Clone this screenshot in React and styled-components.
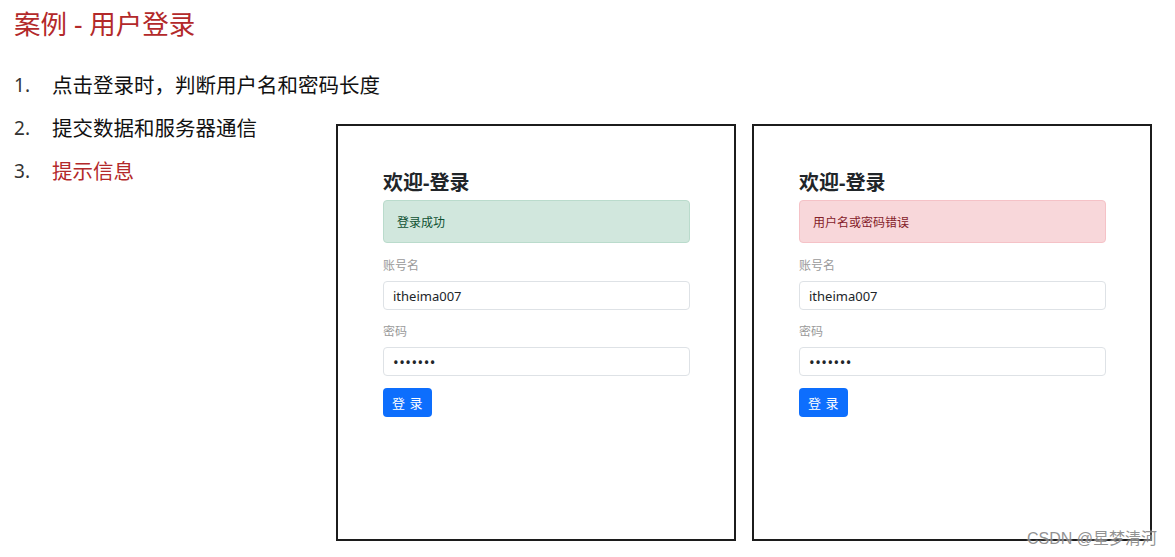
import React from "react";
import styled, { createGlobalStyle, css } from "styled-components";

const GlobalStyle = createGlobalStyle`
  html, body {
    margin: 0;
    padding: 0;
    background: #fff;
  }
  body {
    font-family: "Noto Sans", "Noto Sans CJK SC", sans-serif;
  }
  #root {
    position: relative;
    width: 1175px;
    height: 557px;
    overflow: hidden;
  }
`;

const cjk = `"Noto Sans", "Noto Sans CJK SC", sans-serif`;

const Page = styled.div`
  display: flex;
  flex-direction: column;
`;

const Title = styled.h1`
  margin: 0;
  padding: 6px 0 0 14px;
  font-family: ${cjk};
  font-size: 26.5px;
  font-weight: 400;
  line-height: 36px;
  color: #b3292a;
`;

const Body = styled.div`
  display: flex;
  align-items: flex-start;
  margin-top: 22px;
`;

const Steps = styled.ol`
  list-style: none;
  margin: 0;
  padding: 0 0 0 14px;
  width: 322px;
  flex: none;
`;

const Step = styled.li`
  display: flex;
  white-space: nowrap;
  font-family: ${cjk};
  font-size: 20.5px;
  line-height: 43px;
  color: ${props => (props.highlight ? "#b3292a" : "#111")};
`;

const StepNo = styled.span`
  width: 38px;
  flex: none;
  font-size: 19px;
  color: #333;
`;

const Panels = styled.div`
  display: flex;
  gap: 16px;
  margin-top: 60px;
`;

const Panel = styled.section`
  box-sizing: border-box;
  width: 400px;
  height: 417px;
  border: 2px solid #1c1c1c;
  padding: 45px 0 0 45px;
  font-family: ${cjk};
`;

const Form = styled.div`
  width: 307px;
  display: flex;
  flex-direction: column;
  align-items: flex-start;
`;

const Heading = styled.h2`
  margin: 0 0 5px;
  font-size: 20px;
  font-weight: 700;
  line-height: 24px;
  color: #212529;
`;

const Alert = styled.div`
  box-sizing: border-box;
  width: 100%;
  height: 43px;
  padding: 0 13px;
  display: flex;
  align-items: center;
  border-radius: 4px;
  font-size: 12px;
  ${props =>
    props.variant === "success"
      ? css`
          background: #d1e7dd;
          border: 1px solid #badbcc;
          color: #0f5132;
        `
      : css`
          background: #f8d7da;
          border: 1px solid #f5c2c7;
          color: #842029;
        `}
`;

const Label = styled.label`
  display: block;
  margin: ${props => (props.first ? "14px" : "13px")} 0 6px;
  font-size: 12px;
  line-height: 18px;
  color: #9a9a9a;
`;

const Input = styled.input`
  box-sizing: border-box;
  width: 100%;
  height: 29px;
  padding: 0 9px;
  border: 1px solid #dee2e6;
  border-radius: 4px;
  font-family: ${cjk};
  font-size: 13px;
  color: #212529;
  background: #fff;
  outline: none;
  ${props =>
    props.type === "password" &&
    css`
      font-size: 15px;
      letter-spacing: 0.5px;
    `}
`;

const Button = styled.button`
  margin-top: 12px;
  height: 29px;
  padding: 0 9px;
  border: none;
  border-radius: 4px;
  background: #0d6efd;
  color: #fff;
  font-family: ${cjk};
  font-size: 13px;
  letter-spacing: 0.5px;
  cursor: pointer;
`;

const Watermark = styled.div`
  position: absolute;
  right: 18px;
  top: 529px;
  font-family: "Liberation Sans", "Noto Sans CJK SC", sans-serif;
  font-size: 16px;
  line-height: 20px;
  color: rgba(110, 110, 110, 0.75);
  text-shadow: 0 0 2px #fff;
`;

const steps = [
  { text: "点击登录时，判断用户名和密码长度" },
  { text: "提交数据和服务器通信" },
  { text: "提示信息", highlight: true }
];

const LoginCard = ({ variant, message }) => (
  <Panel>
    <Form>
      <Heading>欢迎-登录</Heading>
      <Alert variant={variant}>{message}</Alert>
      <Label first>账号名</Label>
      <Input type="text" value="itheima007" readOnly />
      <Label>密码</Label>
      <Input type="password" value="1234567" readOnly />
      <Button>登 录</Button>
    </Form>
  </Panel>
);

export default function App() {
  return (
    <Page>
      <GlobalStyle />
      <Title>案例 - 用户登录</Title>
      <Body>
        <Steps>
          {steps.map((s, i) => (
            <Step key={i} highlight={s.highlight}>
              <StepNo>{i + 1}.</StepNo>
              {s.text}
            </Step>
          ))}
        </Steps>
        <Panels>
          <LoginCard variant="success" message="登录成功" />
          <LoginCard variant="danger" message="用户名或密码错误" />
        </Panels>
      </Body>
      <Watermark>CSDN @星梦清河</Watermark>
    </Page>
  );
}
